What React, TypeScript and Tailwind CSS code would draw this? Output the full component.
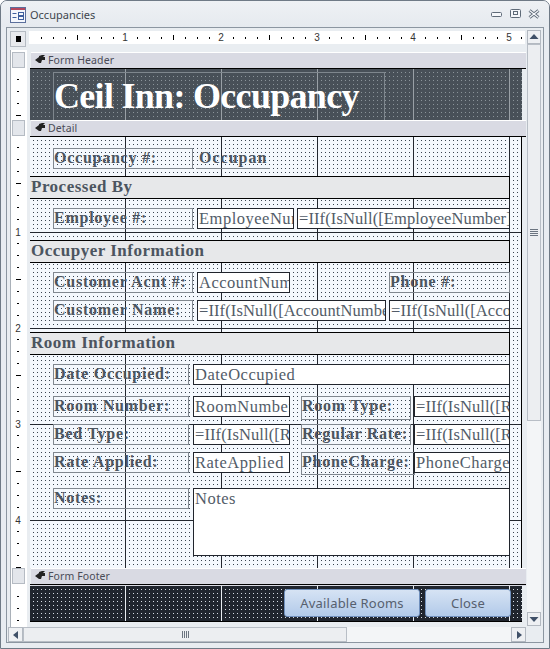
import type { ReactNode } from 'react';

const serif = "font-['Liberation_Serif',serif]";
const ui = "font-['Noto_Sans',sans-serif]";

function Ticks({ count, pad }: { count: number; pad: number }) {
  return (
    <div className="w-[17px] shrink-0 border-l border-[#a9b0b8] bg-white overflow-hidden flex flex-col" style={{ paddingTop: pad }}>
      {Array.from({ length: count }, (_, i) => {
        const n = i + 1;
        return (
          <div key={i} className="h-[12px] shrink-0 flex items-center justify-center pr-[2px]">
            {n % 8 === 0 ? (
              <span className="translate-y-[2px] font-['Liberation_Sans',sans-serif] text-[10px] leading-[12px] text-[#333]">{n / 8}</span>
            ) : n % 4 === 0 ? (
              <span className="ml-[1px] w-[5px] h-px bg-black" />
            ) : (
              <span className="w-[2px] h-px bg-black" />
            )}
          </div>
        );
      })}
    </div>
  );
}

function TopRuler() {
  return (
    <div className="ml-[3px] w-[496px] h-[13px] bg-white pl-[6px] flex items-center overflow-hidden">
      {Array.from({ length: 41 }, (_, i) => {
        const n = i + 1;
        return (
          <div key={i} className="w-[12px] shrink-0 flex items-center justify-center">
            {n % 8 === 0 ? (
              <span className="font-['Liberation_Sans',sans-serif] text-[10px] leading-[12px] text-[#333]">{n / 8}</span>
            ) : n % 4 === 0 ? (
              <span className="w-px h-[5px] bg-black" />
            ) : (
              <span className="w-px h-[2px] bg-black" />
            )}
          </div>
        );
      })}
    </div>
  );
}

function SectionBar({ title, h = 17 }: { title: string; h?: number }) {
  return (
    <div className="flex" style={{ height: h }}>
      <div className="w-[17px] shrink-0 border-l border-[#a9b0b8] bg-white pl-px">
        <div className="w-[13px] h-[16px] bg-[#e3e6eb] border border-[#b5bbc3]" />
      </div>
      <div className="w-[3px] shrink-0" />
      <div className="ml-px w-[495px] border-t border-white bg-[#d9dae3] flex items-start pl-[4px] relative">
        <svg width="10" height="9" viewBox="0 0 10 9" className="mt-[2px] mr-[3px] fill-[#222]">
          <path d="M0 5 L4 2 L4 1 L7 0 L10 0 L8 2 L10 2 L10 5 L7 5 L6 8 L4 8 Z" />
        </svg>
        <span className={`${ui} text-[10.5px] leading-[14px] tracking-[0.1px] text-[#4a4b57]`}>{title}</span>
        <div className="absolute left-[-1px] right-0 top-[15px] h-px bg-black" />
      </div>
    </div>
  );
}

function Label({ w, children, h = 21 }: { w: number; children: ReactNode; h?: number }) {
  return (
    <div
      className={`${serif} shrink-0 self-start border border-[#80878f] font-bold text-[16px] leading-[18px] tracking-[0.75px] whitespace-nowrap text-[#4c5560]`}
      style={{ width: w, height: h }}
    >
      {children}
    </div>
  );
}

function Box({ w, children, h = 21 }: { w: number; children: ReactNode; h?: number }) {
  return (
    <div
      className={`${serif} shrink-0 border border-[#20242c] bg-white pl-[1px] text-[16.5px] leading-[20px] tracking-[0.5px] whitespace-nowrap overflow-hidden text-[#525c68]`}
      style={{ width: w, height: h }}
    >
      {children}
    </div>
  );
}

// expression controls run a little tighter than the plain field names
function Expr({ w, children }: { w: number; children: ReactNode }) {
  return (
    <div
      className={`${serif} shrink-0 border border-[#20242c] bg-white pl-[1px] h-[21px] text-[16.5px] leading-[20px] tracking-[0.1px] whitespace-nowrap overflow-hidden text-[#525c68]`}
      style={{ width: w }}
    >
      {children}
    </div>
  );
}

function Row({ mt, children, h = 21 }: { mt: number; children: ReactNode; h?: number }) {
  return (
    <div className="flex pl-[23px]" style={{ marginTop: mt, height: h }}>
      {children}
    </div>
  );
}

function Band({ mt, children }: { mt: number; children: ReactNode }) {
  return (
    <div
      className={`${serif} w-[480px] h-[23px] bg-[#e7e8ea] border-y border-r border-black pl-px font-bold text-[17px] leading-[20px] tracking-[0.5px] text-[#4c5560]`}
      style={{ marginTop: mt }}
    >
      {children}
    </div>
  );
}

function ScrollArrow({ d, className }: { d: string; className: string }) {
  return (
    <div className={`bg-[#eef0f3] border border-[#b3b9c1] flex items-center justify-center ${className}`}>
      <svg width="10" height="10" viewBox="0 0 10 10" className="fill-[#3f5068]">
        <path d={d} />
      </svg>
    </div>
  );
}

export default function App() {
  return (
    <div className="w-[550px] h-[649px] bg-[#e8ecf1] border border-[#6f7a86] rounded-t-[7px] flex flex-col overflow-hidden">
      <div className="h-[26px] shrink-0 flex items-center pl-[9px] bg-gradient-to-b from-[#eef1f4] to-[#e6eaef]">
        <svg width="16" height="16" viewBox="0 0 16 16" className="mt-[1px]">
          <rect x="0.5" y="0.5" width="15" height="15" fill="#f4f7fd" stroke="#5b6f9c" />
          <rect x="1" y="1" width="14" height="2" fill="#b5485f" />
          <path d="M2.5 6.5h4M2.5 10.5h4" stroke="#3f5f9e" />
          <rect x="8.5" y="5.5" width="5" height="3" fill="none" stroke="#3f5f9e" />
          <rect x="8.5" y="9.5" width="5" height="3" fill="none" stroke="#3f5f9e" />
        </svg>
        <span className={`${ui} ml-[4px] text-[11px] leading-[16px] mt-[1px] text-[#40454d]`}>Occupancies</span>
        <div className="ml-auto mr-[9px] flex items-end gap-[7px]">
          <svg width="12" height="6" viewBox="0 0 12 6" className="mb-[1px]">
            <rect x="0.5" y="0.5" width="10" height="4" rx="1" fill="#f5f7fa" stroke="#5f6b78" />
          </svg>
          <svg width="11" height="9" viewBox="0 0 11 9" className="mb-[1px]">
            <rect x="0.5" y="0.5" width="10" height="8" rx="1" fill="#f5f7fa" stroke="#5f6b78" />
            <rect x="3.5" y="2.5" width="4" height="3" fill="none" stroke="#5f6b78" />
          </svg>
          <svg width="12" height="10" viewBox="0 0 12 10">
            <path d="M1.5 1.5l9 7M10.5 1.5l-9 7" stroke="#5f6b78" strokeWidth="3" />
            <path d="M1.5 1.5l9 7M10.5 1.5l-9 7" stroke="#f5f7fa" strokeWidth="1.2" />
          </svg>
        </div>
      </div>

      <div className="ml-[5px] w-[538px] h-[616px] border border-[#8c96a1] bg-[#e9edf1] flex">
        <div className="w-[519px] shrink-0 flex flex-col">
          <div className="h-[22px] shrink-0 flex items-start pt-[3px] pl-[3px]">
            <div className="w-[16px] h-[16px] bg-[#e8eaee] border border-[#b5bbc3] flex items-center justify-center">
              <span className="w-[5px] h-[6px] bg-black" />
            </div>
            <TopRuler />
          </div>

          <div className="pl-[3px] flex flex-col">
            <div className="h-[2px] w-[17px] border-l border-[#a9b0b8] bg-white" />
            <SectionBar title="Form Header" />
            <div className="flex h-[51px]">
              <Ticks count={4} pad={4} />
              <div className="w-[3px] shrink-0" />
              <div className="w-[492px] pl-[23px] pt-[3px] bg-[#485058] [background-image:linear-gradient(to_right,transparent_95px,#99a0a6_95px),radial-gradient(circle_at_0.5px_0.5px,#8b949a_0.7px,transparent_0.7px)] [background-size:96px_96px,4px_4px] [background-position:0_0,3px_3px]">
                <div className={`${serif} w-[332px] h-[48px] border border-b-0 border-[#7f878e] font-bold text-[36px] leading-[46px] tracking-[-0.7px] whitespace-nowrap text-white`}>
                  Ceil Inn: Occupancy
                </div>
              </div>
            </div>

            <SectionBar title="Detail" />
            <div className="flex h-[431px]">
              <Ticks count={36} pad={4} />
              <div className="w-[3px] shrink-0" />
              <div className="w-[492px] border-r border-black bg-[#f4f8fd] [background-image:linear-gradient(to_right,transparent_95px,#23272f_95px),linear-gradient(to_bottom,transparent_95px,#23272f_95px),radial-gradient(circle_at_0.5px_0.5px,#3a4450_0.7px,transparent_0.7px)] [background-size:96px_96px,96px_96px,4px_4px] [background-position:0_0,0_0,3px_3px]">
                <div className="h-[11px]" />
                <Row mt={0}>
                  <Label w={140}>Occupancy #:</Label>
                  <div className={`${serif} ml-[3px] w-[74px] h-[21px] border-b border-[#80878f] pl-[3px] font-bold text-[16px] leading-[20px] tracking-[1px] overflow-hidden whitespace-nowrap text-[#4c5560]`}>
                    Occupan
                  </div>
                </Row>
                <Band mt={7}>Processed By</Band>
                <Row mt={9}>
                  <Label w={140}>Employee #:</Label>
                  <div className="w-[4px]" />
                  <Box w={97}>EmployeeNumber</Box>
                  <div className="w-[3px]" />
                  <Expr w={213}>=IIf(IsNull([EmployeeNumber])</Expr>
                </Row>
                <Band mt={11}>Occupyer Information</Band>
                <Row mt={9}>
                  <Label w={140}>Customer Acnt #:</Label>
                  <div className="w-[4px]" />
                  <Box w={93}>AccountNumber</Box>
                  <div className="w-[99px]" />
                  <Label w={121}>Phone #:</Label>
                </Row>
                <Row mt={7}>
                  <Label w={140}>Customer Name:</Label>
                  <div className="w-[4px]" />
                  <Expr w={189}>=IIf(IsNull([AccountNumber])</Expr>
                  <div className="w-[3px]" />
                  <Expr w={121}>=IIf(IsNull([Account</Expr>
                </Row>
                <Band mt={11}>Room Information</Band>
                <Row mt={9}>
                  <Label w={136}>Date Occupied:</Label>
                  <div className="w-[4px]" />
                  <Box w={317}>DateOccupied</Box>
                </Row>
                <Row mt={11}>
                  <Label w={136}>Room Number:</Label>
                  <div className="w-[4px]" />
                  <Box w={97}>RoomNumber</Box>
                  <div className="w-[11px]" />
                  <Label w={110} h={24}>Room Type:</Label>
                  <div className="w-[3px]" />
                  <Expr w={96}>=IIf(IsNull([R</Expr>
                </Row>
                <Row mt={7}>
                  <Label w={136}>Bed Type:</Label>
                  <div className="w-[4px]" />
                  <Expr w={97}>=IIf(IsNull([R</Expr>
                  <div className="w-[11px]" />
                  <Label w={110}>Regular Rate:</Label>
                  <div className="w-[3px]" />
                  <Expr w={96}>=IIf(IsNull([R</Expr>
                </Row>
                <Row mt={7}>
                  <Label w={136}>Rate Applied:</Label>
                  <div className="w-[4px]" />
                  <Box w={97}>RateApplied</Box>
                  <div className="w-[11px]" />
                  <Label w={114} h={23}>PhoneCharge:</Label>
                  <div className="w-[96px] -ml-px">
                    <Box w={96}>PhoneCharge</Box>
                  </div>
                </Row>
                <Row mt={15} h={67}>
                  <Label w={136}>Notes:</Label>
                  <div className="w-[4px]" />
                  <Box w={317} h={68}>Notes</Box>
                </Row>
              </div>
            </div>

            <SectionBar title="Form Footer" h={18} />
            <div className="flex h-[36px]">
              <Ticks count={3} pad={4} />
              <div className="w-[3px] shrink-0" />
              <div className="w-[492px] border-b border-black flex items-start justify-end gap-[5px] pr-[11px] pt-[3px] bg-[#20252e] [background-image:linear-gradient(to_right,transparent_95px,#e8ecf1_95px),radial-gradient(circle_at_0.5px_0.5px,#d5dbe3_0.7px,transparent_0.7px)] [background-size:96px_96px,4px_4px] [background-position:0_0,3px_3px]">
                <button className={`${ui} w-[136px] h-[28px] rounded-[3px] border border-[#6f8fbc] bg-gradient-to-b from-[#d6e3f4] to-[#b2cae9] text-[13px] leading-[18px] tracking-[0.2px] text-[#57606e]`}>
                  Available Rooms
                </button>
                <button className={`${ui} w-[86px] h-[28px] rounded-[3px] border border-[#6f8fbc] bg-gradient-to-b from-[#d6e3f4] to-[#b2cae9] text-[13px] leading-[18px] tracking-[0.2px] text-[#57606e]`}>
                  Close
                </button>
              </div>
            </div>
            <div className="h-[5px] w-[17px] border-l border-[#a9b0b8] bg-white" />

            <div className="-ml-[2px] w-[519px] h-[15px] flex">
              <ScrollArrow d="M7 1v8L2 5z" className="w-[15px]" />
              <div className="w-[324px] bg-[#eceef1] border border-[#b8bec6] flex items-center justify-center gap-px">
                <span className="w-px h-[7px] bg-[#6b7480]" />
                <span className="w-px h-[7px] bg-[#6b7480]" />
                <span className="w-px h-[7px] bg-[#6b7480]" />
                <span className="w-px h-[7px] bg-[#6b7480]" />
              </div>
              <div className="w-[164px] bg-[#f3f5f7]" />
              <ScrollArrow d="M3 1v8l5-4z" className="w-[15px]" />
            </div>
          </div>
        </div>

        <div className="w-[14px] shrink-0 ml-px mt-[2px] h-[596px] flex flex-col">
          <ScrollArrow d="M0.5 7L5 2l4.5 5z" className="h-[14px]" />
          <div className="h-[377px] bg-[#eceef1] border border-[#b8bec6] flex flex-col items-center justify-center gap-px">
            <span className="w-[8px] h-px bg-[#6b7480]" />
            <span className="w-[8px] h-px bg-[#6b7480]" />
            <span className="w-[8px] h-px bg-[#6b7480]" />
            <span className="w-[8px] h-px bg-[#6b7480]" />
          </div>
          <div className="flex-1 bg-[#f3f5f7]" />
          <ScrollArrow d="M0.5 3L5 8l4.5-5z" className="h-[14px]" />
        </div>
      </div>
    </div>
  );
}
